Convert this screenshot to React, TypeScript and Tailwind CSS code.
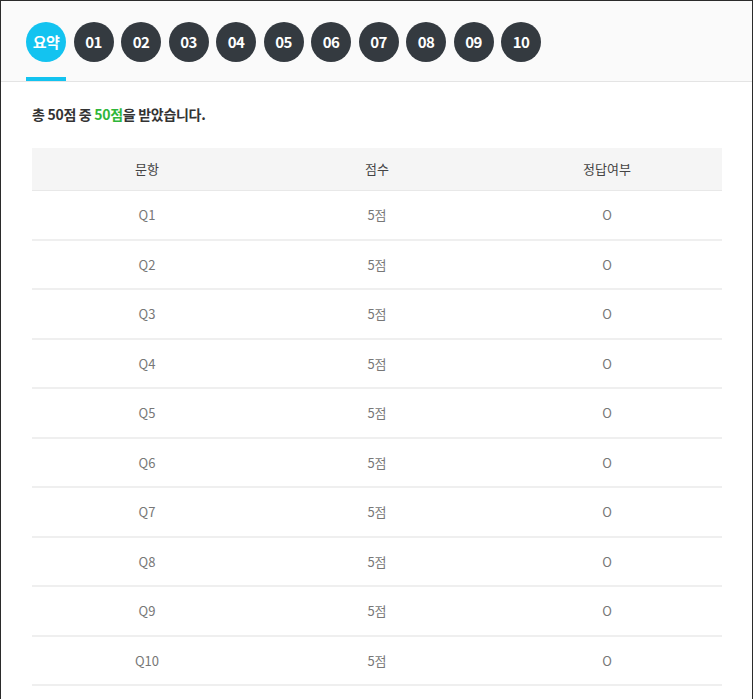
import React from "react";

const tabs = ["요약", "01", "02", "03", "04", "05", "06", "07", "08", "09", "10"];
const rows = Array.from({ length: 10 }, (_, i) => ({ q: `Q${i + 1}`, score: "5점", ok: "O" }));

export default function App() {
  return (
    <div
      className="w-[753px] min-h-[699px] border border-b-0 border-[#2b2b2b] bg-white"
      style={{ fontFamily: '"Noto Sans CJK KR", "Noto Sans", sans-serif' }}
    >
      <div className="h-[81px] bg-[#fafafa] border-b border-[#e4e4e4] pl-[25px] flex gap-[7.5px]">
        {tabs.map((t, i) => (
          <div key={t} className="flex flex-col items-center h-full w-10">
            <div
              className={`mt-[21px] w-10 h-10 rounded-full flex items-center justify-center text-white text-[15px] font-bold tracking-[-0.5px] ${
                i === 0 ? "bg-[#13c3f0]" : "bg-[#343a40]"
              }`}
            >
              {t}
            </div>
            {i === 0 && <div className="mt-auto w-10 h-[4px] bg-[#13c3f0]" />}
          </div>
        ))}
      </div>
      <div className="px-[31px] pt-[22px]">
        <p className="text-[14px] leading-[20px] font-semibold text-[#333] tracking-[-0.3px]">
          총 50점 중 <span className="text-[#2fb63a]">50점</span>을 받았습니다.
        </p>
        <div className="mt-[24px] w-[690px]">
          <div className="grid grid-cols-3 h-[43px] bg-[#f5f5f5] border-b border-[#e8e8e8] items-center text-center text-[13px] text-[#444]">
            <div>문항</div>
            <div>점수</div>
            <div>정답여부</div>
          </div>
          {rows.map((r) => (
            <div
              key={r.q}
              className="grid grid-cols-3 h-[49.5px] border-b-2 border-[#efefef] items-center text-center text-[13px] text-[#777]"
            >
              <div>{r.q}</div>
              <div>{r.score}</div>
              <div>{r.ok}</div>
            </div>
          ))}
        </div>
      </div>
    </div>
  );
}
